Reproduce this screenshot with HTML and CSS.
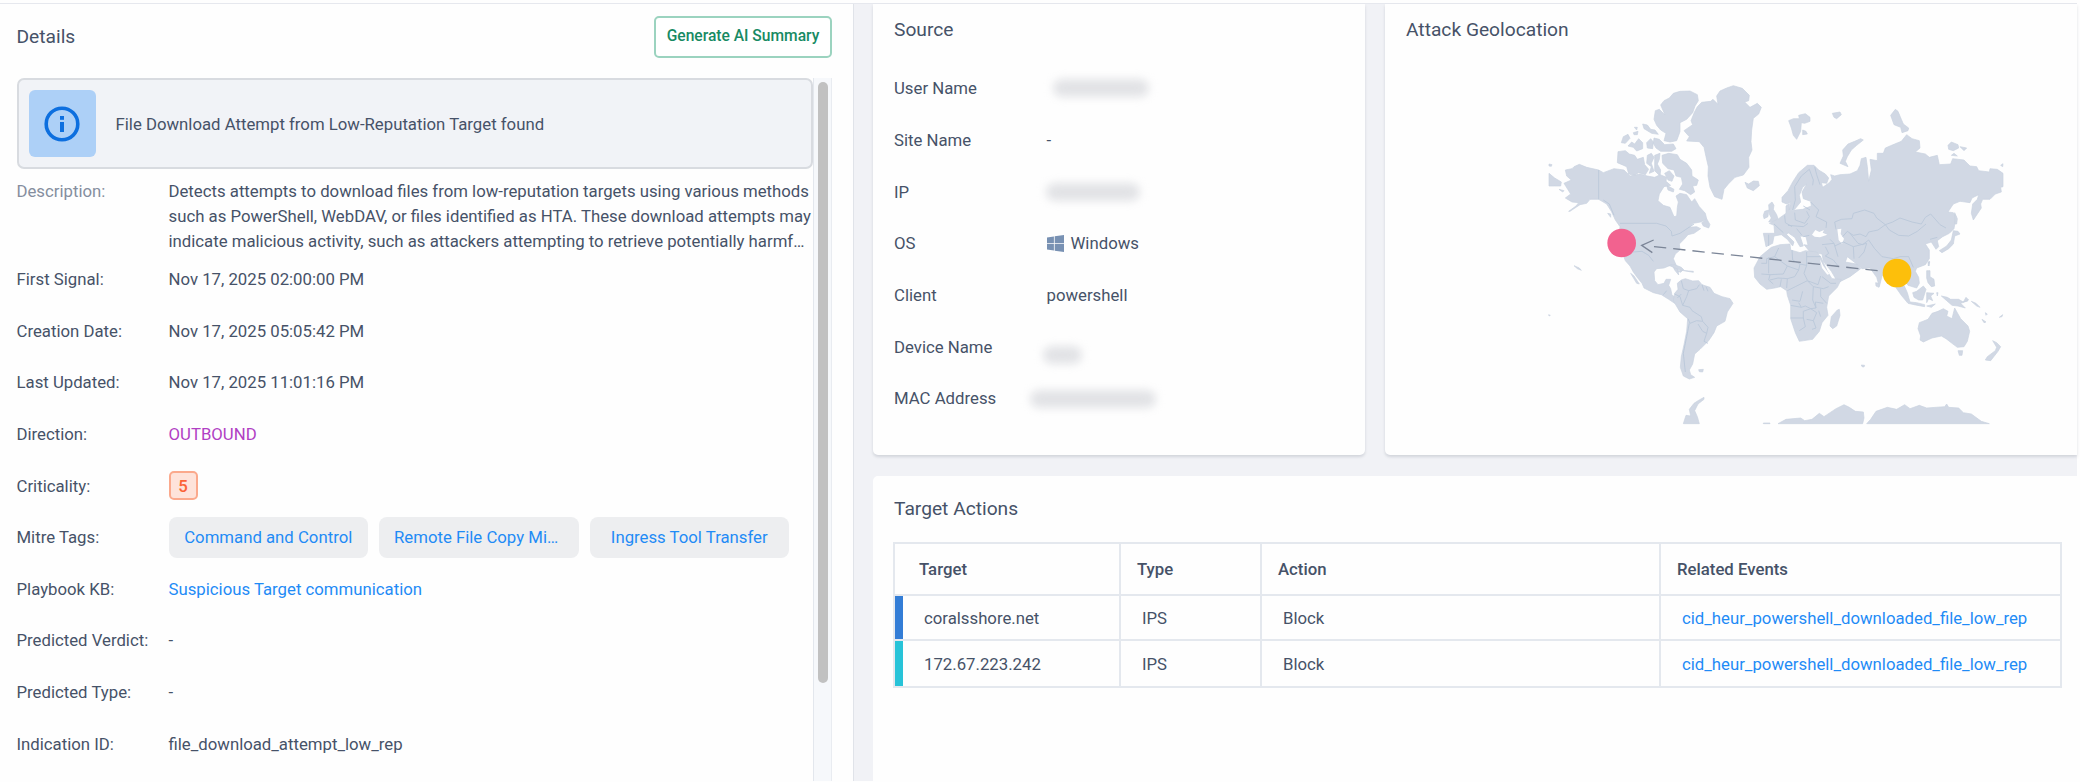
FILE: index.html
```html
<!DOCTYPE html>
<html lang="en">
<head>
	<meta charset="utf-8">
	<title>Story details</title>
	<link rel="stylesheet" href="styles.css">
</head>
<body>
	<div class="page">
		<section class="details">
			<header class="details-head">
				<h2>Details</h2>
				<button class="ai-btn">Generate AI Summary</button>
			</header>
			<div class="details-body">
				<div class="details-content">
					<div class="alert">
						<div class="alert-icon">
							<svg viewBox="0 0 36 36" width="36" height="36">
								<circle cx="18" cy="18" r="15.8" fill="none" stroke="#0d6fdf" stroke-width="3.6"/>
								<rect x="16" y="10" width="4" height="3.8" fill="#0d6fdf"/>
								<rect x="16" y="16" width="4" height="10" fill="#0d6fdf"/>
							</svg>
						</div>
						<span class="alert-text">File Download Attempt from Low-Reputation Target found</span>
					</div>
					<dl class="fields">
						<div class="field field-desc">
							<dt>Description:</dt>
							<dd>Detects attempts to download files from low-reputation targets using various methods<br>such as PowerShell, WebDAV, or files identified as HTA. These download attempts may<br>indicate malicious activity, such as attackers attempting to retrieve potentially harmf…</dd>
						</div>
						<div class="field"><dt>First Signal:</dt><dd>Nov 17, 2025 02:00:00 PM</dd></div>
						<div class="field"><dt>Creation Date:</dt><dd>Nov 17, 2025 05:05:42 PM</dd></div>
						<div class="field"><dt>Last Updated:</dt><dd>Nov 17, 2025 11:01:16 PM</dd></div>
						<div class="field"><dt>Direction:</dt><dd class="outbound">OUTBOUND</dd></div>
						<div class="field"><dt>Criticality:</dt><dd><span class="crit">5</span></dd></div>
						<div class="field">
							<dt>Mitre Tags:</dt>
							<dd class="tags">
								<a class="tag">Command and Control</a>
								<a class="tag tag-cut">Remote File Copy Mi…</a>
								<a class="tag">Ingress Tool Transfer</a>
							</dd>
						</div>
						<div class="field"><dt>Playbook KB:</dt><dd><a class="link">Suspicious Target communication</a></dd></div>
						<div class="field"><dt>Predicted Verdict:</dt><dd>-</dd></div>
						<div class="field"><dt>Predicted Type:</dt><dd>-</dd></div>
						<div class="field"><dt>Indication ID:</dt><dd>file_download_attempt_low_rep</dd></div>
					</dl>
				</div>
				<div class="scroll"><div class="thumb"></div></div>
			</div>
		</section>

		<main class="main">
			<div class="top-cards">
				<section class="card source">
					<h2>Source</h2>
					<dl class="src-list">
						<div class="src-row"><dt>User Name</dt><dd><span class="mask mask-user"></span></dd></div>
						<div class="src-row"><dt>Site Name</dt><dd>-</dd></div>
						<div class="src-row"><dt>IP</dt><dd><span class="mask mask-ip"></span></dd></div>
						<div class="src-row">
							<dt>OS</dt>
							<dd>
								<svg class="win" viewBox="0 0 17 17" width="17" height="17" fill="#7891b3">
									<path d="M0 2.4 6.9 1.4V8H0zM7.7 1.3 17 0v8H7.7zM0 8.8h6.9v6.7L0 14.6zM7.7 8.8H17V17l-9.3-1.3z"/>
								</svg>Windows
							</dd>
						</div>
						<div class="src-row"><dt>Client</dt><dd>powershell</dd></div>
						<div class="src-row"><dt>Device Name</dt><dd><span class="mask mask-device"></span></dd></div>
						<div class="src-row"><dt>MAC Address</dt><dd><span class="mask mask-mac"></span></dd></div>
					</dl>
				</section>

				<section class="card geo">
					<h2>Attack Geolocation</h2>
					<svg class="map" viewBox="0 0 1440 1110" width="480" height="370">
						<g class="land">
							<!-- Greenland, Iceland -->
							<path d="M432 182 458 164 453 152 463 127 472 110 485 97 512 94 519 88 534 103 530 78 540 63 560 54 580 47 607 55 628 76 626 92 614 96 630 112 652 100 664 112 656 132 640 145 635 180 633 215 636 240 626 262 627 292 610 315 585 322 565 342 552 358 546 388 524 380 510 352 504 318 505 290 498 260 492 232 478 215 440 213 448 200z"/>
							<path d="M615 337 626 342 640 333 655 334 658 347 640 362 622 354z"/>
							<!-- Arctic islands -->
							<path d="M362 105 372 92 388 84 400 70 420 64 450 63 472 74 475 92 465 108 458 128 440 148 420 158 420 185 410 212 390 216 372 212 378 190 362 180 350 166 342 148 346 122 358 118 375 135z"/>
							<path d="M244 218 250 200 264 193 270 205 256 220zM280 188 294 184 292 194 282 194zM283 172 292 172 290 180zM308 162 322 165 332 178 345 180 355 193 335 190 312 176zM264 228 275 216 284 222 296 206 308 218 308 236 290 243 280 232zM320 218 332 206 340 216 338 236 322 234zM342 204 358 208 374 224 400 222 408 236 395 244 362 244 348 234 340 220z"/>
							<path d="M234 245 256 242 268 252 284 256 292 268 310 262 314 284 326 298 316 314 296 308 282 316 266 312 260 290 246 284 232 278zM322 256 334 250 342 262 334 280 342 304 328 310 334 290 320 280zM344 256 360 250 358 268 352 282 362 300 360 318 344 302zM366 256 386 250 412 254 420 268 440 280 455 300 456 318 475 330 470 346 458 348 464 366 452 374 434 362 418 358 428 342 424 322 408 318 402 300 384 296 368 280zM374 310 388 302 402 318 396 334 384 330zM380 346 402 358 400 366 384 360z"/>
							<!-- North and Central America -->
							<path d="M76 300 96 296 102 290 118 283 140 292 176 300 190 308 222 296 252 300 270 318 300 312 322 318 344 322 360 314 380 322 378 334 392 346 372 350 358 372 354 392 370 406 390 412 402 440 410 438 412 412 415 396 408 378 420 370 440 374 455 396 464 386 478 410 496 430 500 446 482 456 460 460 446 472 470 470 482 476 462 490 444 494 432 508 418 522 420 540 406 552 400 566 414 598 416 615 404 600 396 584 372 594 350 596 342 606 344 632 354 644 372 640 378 628 392 628 386 646 392 656 396 676 412 684 424 690 404 700 386 688 364 674 340 668 312 654 306 640 290 620 280 606 270 588 256 572 244 540 236 500 240 470 226 450 214 424 200 402 176 388 150 388 140 400 120 404 90 424 86 424 108 408 116 398 96 396 76 384 92 372 72 340 94 330 80 318z"/>
							<path d="M27 310 44 324 64 336 62 348 44 348 27 348zM27 282 36 284 34 289 27 288zM57 358 72 362 68 366zM203 430 212 432 212 442zM485 458 500 446 510 464 506 474 490 468zM272 610 282 618 298 642 290 640zM386 586 404 584 424 592 434 602 460 604 460 607 420 600zM412 603 428 601 422 607zM102 587 118 594 124 601 112 596z"/>
							<!-- South America -->
							<g transform="translate(0 540)">
								<path d="M412 100 424 90 436 86 458 93 476 92 486 104 510 112 522 130 546 140 570 146 579 160 562 186 555 214 530 228 522 248 506 272 496 282 480 298 464 312 458 342 448 360 452 374 464 382 448 387 430 378 421 352 424 320 432 284 440 244 443 206 420 186 400 152 404 130 414 118zM476 359 490 358 488 366 478 365zM430 521 438 496 452 498 448 478 462 460 474 452 492 442 492 448 474 462 464 482 472 500 478 521zM26 194 31 196 27 198z"/>
							</g>
							<g transform="translate(660 0)">
								<!-- Arctic and Europe islands -->
								<path d="M86 152 100 146 118 146 116 136 136 131 150 142 150 154 134 160 124 158 122 184 110 208 100 196 94 174zM128 180 138 184 142 192 128 194zM217 130 240 126 244 134 230 146 222 142zM392 136 406 118 414 124 424 148 430 162 446 174 444 182 426 188 422 172 402 164zM240 280 250 258 248 240 264 222 284 214 302 206 310 210 290 226 274 240 262 260 256 274 264 290zM564 226 574 216 594 224 596 234 580 242 566 238zM600 230 620 234 612 242zM574 256 582 250 592 258zM722 286 729 281 728 290zM26 404 36 396 42 406 40 418 50 434 54 446 44 454 26 456 34 444 28 432zM10 436 14 424 26 420 24 440 12 446z"/>
								<!-- Eurasia -->
								<path d="M66 382 84 362 98 336 116 308 142 286 162 286 176 300 196 312 206 324 200 340 184 338 188 352 208 338 216 328 212 314 224 318 240 314 270 312 292 302 300 286 304 266 318 262 322 290 326 334 334 300 330 268 352 272 352 250 370 250 376 234 404 222 424 214 440 194 456 206 478 212 480 234 466 246 496 252 508 262 532 256 538 284 572 282 578 266 612 270 630 288 650 290 656 302 688 306 690 296 712 298 729 310 729 350 722 352 724 366 706 372 690 388 668 388 662 402 664 414 640 450 634 430 638 402 652 388 656 374 636 384 630 398 600 394 580 402 564 426 580 428 588 440 582 476 568 490 548 500 532 512 536 530 528 538 514 516 496 522 508 540 508 566 496 584 470 594 466 604 476 622 478 640 470 654 444 646 426 620 400 600 380 606 366 618 358 650 350 622 330 594 306 596 290 582 262 560 256 576 290 582 302 596 270 620 234 638 214 604 190 574 186 552 150 546 132 524 144 526 138 500 120 498 130 528 120 530 104 502 84 488 80 494 102 516 98 528 82 508 64 494 42 498 38 520 18 530 10 490 44 490 42 466 28 460 56 446 78 430 78 408 88 400 88 422 106 420 128 418 154 408 152 394 130 386 126 366 140 342 128 352 118 376 122 396 104 418 88 420 92 396 80 402 66 396z"/>
								<!-- Japan, Sakhalin, Philippines -->
								<path d="M584 428 592 446 590 462 584 462zM580 482 594 484 600 492 584 498 580 522 566 536 546 548 538 542 560 528 574 510zM504 576 509 574 505 588z"/>
							</g>
							<!-- Africa, Madagascar -->
							<path d="M694 532 720 524 750 522 752 540 780 548 796 542 830 546 842 560 862 604 876 626 904 628 892 652 866 678 860 712 864 736 846 758 838 784 818 808 778 814 766 788 752 746 752 706 742 676 740 662 722 650 704 654 680 658 660 642 644 622 642 594 660 560zM892 720 898 718 900 736 890 768 878 776 870 768 874 740z"/>
							<g transform="translate(630 540)">
								<!-- South-East Asia -->
								<path d="M377 98 386 100 387 112 378 108zM436 110 448 112 462 106 472 128 480 156 500 158 524 164 524 170 492 164 474 160 454 136zM488 128 500 124 520 108 528 118 518 150 506 150 492 142zM530 128 552 130 542 138 548 152 536 146 530 158zM530 62 540 62 540 80 552 88 554 108 544 110 534 98 530 84zM535 38 539 36 537 48zM530 168 556 162 544 172zM560 128 564 128 562 138zM574 138 592 142 602 148 626 148 640 156 654 152 632 160 646 174 624 168 606 166 590 152zM648 142 656 150 640 156zM664 154 678 160 690 172 680 168zM706 188 712 192 708 196zM696 208 708 216 702 218zM748 202 758 194 756 200z"/>
								<!-- Australia, New Zealand -->
								<path d="M508 218 534 208 546 190 564 184 580 176 594 184 590 198 606 206 614 174 624 192 632 206 654 228 659 244 652 274 642 290 622 292 606 280 588 266 574 258 546 264 520 276 510 270 512 258 504 236zM624 302 638 302 636 316 628 316zM728 272 740 278 752 290 744 304 722 332 706 330 712 320 736 302 740 292zM334 345 344 346 342 351 336 350z"/>
								<!-- Antarctica -->
								<path d="M40 519h20v2H40zM84 521 108 508 152 504 164 512 186 508 208 490 222 500 258 476 282 464 298 472 316 484 340 486 342 504 338 521zM350 521 362 508 378 484 412 472 440 478 464 464 480 476 508 466 530 474 584 470 590 462 596 472 626 474 640 488 664 492 694 514 718 521z"/>
							</g>
						</g>
						<!-- inland waters -->
						<path class="water" d="M816 494 826 480 838 486 852 480 848 488 862 494 840 502 824 500zM892 478 904 476 902 492 912 506 906 522 896 510zM840 568 850 588 868 612 862 614 846 594z"/>
						<!-- country borders -->
						<g class="borders">
							<path d="M176 300V388M190 390 208 402 222 436M240 460H350L378 468 394 484 396 498 420 490 444 474 462 462M278 546 306 544 326 556 340 574M370 674 380 662M412 684 424 672"/>
							<path transform="translate(0 540)" d="M424 92 430 116 446 122 440 140 428 166 450 172 456 182 484 200 488 214 470 212 450 220 444 206M404 132 420 140 428 166M446 122 470 116 478 104M486 104 492 122M498 110 504 124M448 220 440 260 430 310 436 366M488 214 504 232 500 250 488 244 474 222M500 250 492 274 504 280"/>
							<path transform="translate(660 0)" d="M98 420 106 390 104 350 124 318 148 298 160 330 158 346M164 290 170 314 180 344M152 396 176 420 168 440 200 456 198 474M130 408 150 420M74 436 76 458 96 470M104 428 106 450 134 460 148 440 140 424M42 462 70 488M84 466 130 470 144 460M110 476 126 496M148 496 130 500M26 494V528M228 478 224 456 244 448 276 446 280 430 314 420 342 430 350 444 376 464 354 480 326 486 318 500 300 492 280 496 262 484 248 500M376 464 398 456 420 444 456 456 484 462 496 442 512 432 540 464 558 474M376 464 388 480 416 496 446 498 472 484 498 462M326 510 344 536 366 560 400 566 420 560 446 560 460 592M270 490 294 520 308 524 326 510M222 520 234 560M224 528 250 516 280 530 282 566M280 530 320 520 312 546 296 564M210 508 222 520 186 524M196 530 206 550 196 558 220 570 236 590M510 508 532 502"/>
							<path d="M716 534 704 560 680 566 680 580 664 580M704 560 742 588 730 612 690 614M686 562V610M756 540 758 570 780 582 776 600 764 620M780 582 800 586 800 560H842M800 560V546M800 586 792 610 802 630M742 588 776 600M664 612 690 614 686 630 700 642M690 630 714 624 742 626 764 620M724 628 720 650M742 626 740 654M742 662 766 650 802 632 834 644 842 618M802 632 820 650 850 656 866 650M846 620 872 640 888 640M756 690 780 694 788 664M820 650 818 690 828 714 812 716 796 708 784 712 776 698M752 706 784 712M828 714 826 696 850 700M752 744H790V724L812 716M790 744 796 770 778 782M812 716 830 728 820 752 800 748M820 752 828 774 816 778M836 722 842 740M842 656V680L860 700"/>
						</g>
						<!-- attack route -->
						<path class="route" d="M1013 602 335 529"/>
						<path class="route-head" d="M341 510 305 526 337 548"/>
						<circle cx="245" cy="519" r="43" fill="#f2628f"/>
						<circle cx="1071" cy="609" r="43" fill="#fdbf0b"/>
					</svg>
				</section>
			</div>

			<section class="card actions">
				<h2>Target Actions</h2>
				<table>
					<colgroup><col class="c1"><col class="c2"><col class="c3"><col class="c4"></colgroup>
					<thead>
						<tr><th>Target</th><th>Type</th><th>Action</th><th>Related Events</th></tr>
					</thead>
					<tbody>
						<tr class="blue"><td>coralsshore.net</td><td>IPS</td><td>Block</td><td><a class="link">cid_heur_powershell_downloaded_file_low_rep</a></td></tr>
						<tr class="cyan"><td>172.67.223.242</td><td>IPS</td><td>Block</td><td><a class="link">cid_heur_powershell_downloaded_file_low_rep</a></td></tr>
					</tbody>
				</table>
			</section>
		</main>
	</div>
</body>
</html>
```

FILE: styles.css
```css
*{
	box-sizing:border-box;
}
body{
	margin:0;
	width:2080px;
	height:782px;
	overflow:hidden;
	background:#fefefe;
	color:#465268;
	font-family:Roboto, "Liberation Sans", sans-serif;
	font-size:16.75px;
}
h2, dl, dd{
	margin:0;
}
h2{
	font-size:19.2px;
	line-height:24px;
	font-weight:400;
}
.page{
	display:flex;
	width:2077px;
	height:778px;
	margin-top:3px;
	border-top:1px solid #e6e8ee;
}

/* left panel */
.details{
	width:853px;
	padding:12px 21px 0 16.5px;
	display:flex;
	flex-direction:column;
}
.details-head{
	display:flex;
	justify-content:space-between;
	align-items:center;
	height:42px;
	flex:none;
}
.ai-btn{
	width:178px;
	height:42px;
	padding:0 0 3px;
	border:2px solid #9bd3bf;
	border-radius:5px;
	background:#fff;
	color:#178a63;
	font-family:inherit;
	font-size:15.6px;
	font-weight:500;
	white-space:nowrap;
}
.details-body{
	display:flex;
	flex:1;
	margin-top:20px;
	min-height:0;
}
.details-content{
	width:796.5px;
}
.alert{
	display:flex;
	align-items:center;
	height:91px;
	padding-left:10px;
	border:2px solid #d8dbe0;
	border-radius:7px;
	background:#f1f3f7;
}
.alert-icon{
	display:flex;
	align-items:center;
	justify-content:center;
	width:67px;
	height:67px;
	border-radius:6px;
	background:#add0f7;
}
.alert-text{
	margin-left:20px;
}
.field{
	display:flex;
	align-items:center;
	height:51.6px;
}
.field dt{
	width:152px;
	flex:none;
	white-space:nowrap;
}
.field dd{
	white-space:nowrap;
}
.field-desc{
	align-items:flex-start;
	height:84.5px;
	padding-top:10px;
	line-height:25px;
}
.field-desc dt{
	color:#858e9e;
}
.field .outbound{
	color:#b13fc4;
}
.crit{
	display:flex;
	align-items:center;
	justify-content:center;
	width:29px;
	height:29px;
	border:2px solid #fba98c;
	border-radius:5px;
	background:#fee3da;
	color:#fb6236;
	font-weight:500;
}
.tags{
	display:flex;
	gap:11px;
}
.tag{
	width:199.5px;
	height:41px;
	border-radius:8px;
	background:#edeef0;
	color:#1f8bf6;
	line-height:41px;
	text-align:center;
}
.tag-cut{
	padding-left:15px;
	text-align:left;
}
.link{
	color:#1f8bf6;
}
.scroll{
	width:19px;
	padding:4px 4px 0;
	border-left:1px solid #e3e7ed;
	border-right:1px solid #e9ecf1;
	background:#f6f8fb;
}
.thumb{
	width:10px;
	height:601px;
	border-radius:5px;
	background:#c1c1c1;
}

/* right side */
.main{
	width:1224px;
	padding-left:19px;
	border-left:1px solid #e0e3e9;
	background:#f1f2f6;
	display:flex;
	flex-direction:column;
	gap:21px;
}
.top-cards{
	display:flex;
	gap:20px;
	height:451px;
}
.card{
	background:#fefefe;
	border-radius:5px;
	box-shadow:0 2px 3px rgba(60,70,90,.17);
}
.source{
	width:492px;
	padding:14px 21px 0;
	border-radius:0 0 5px 5px;
}
.src-list{
	margin-top:20.5px;
}
.src-row{
	display:flex;
	align-items:center;
	height:51.7px;
}
.src-row dt{
	width:152.5px;
}
.src-row dd{
	display:flex;
	align-items:center;
}
.win{
	margin-right:7px;
}
/* redacted values */
.mask{
	display:block;
	height:18px;
	border-radius:9px;
	background:#e2e3e6;
	filter:blur(4.5px);
}
.mask-user{
	width:96px;
	margin-left:6px;
}
.mask-ip{
	width:94px;
	margin-left:-1px;
}
.mask-device{
	width:39px;
	margin:16px 0 0 -4px;
}
.mask-mac{
	width:126px;
	margin:2px 0 0 -17px;
}
.geo{
	flex:1;
	padding:14px 0 0 21px;
	border-radius:0 0 0 5px;
}
.map{
	display:block;
	margin:28px 0 0 134px;
}
.land{
	fill:#d1d8e4;
	stroke:#c8d2df;
	stroke-width:2;
	stroke-linejoin:round;
}
.water{
	fill:#fefefe;
}
.borders{
	fill:none;
	stroke:#b8c7d9;
	stroke-width:2.5;
}
.route, .route-head{
	fill:none;
	stroke:#7b8597;
	stroke-width:4;
}
.route{
	stroke-dasharray:37 21;
}
.actions{
	flex:1;
	padding:21px 17px 0 21px;
	border-radius:5px 0 0 0;
	box-shadow:none;
}
.actions table{
	width:1167px;
	margin:21px 0 0 -1px;
	table-layout:fixed;
	border-collapse:collapse;
	border:2px solid #dbe1e9;
}
.c1{ width:226px; }
.c2{ width:141px; }
.c3{ width:399px; }
.c4{ width:401px; }
.actions th, .actions td{
	padding:0 0 0 21px;
	border:2px solid #e4e8ee;
	text-align:left;
	white-space:nowrap;
}
.actions th{
	height:52px;
	padding:0 0 1px 16px;
	font-weight:500;
}
.actions td{
	height:45px;
}
.actions .cyan td{
	height:47px;
}
.actions th:first-child{
	padding-left:24px;
}
.actions td:first-child{
	padding-left:29px;
}
.blue td:first-child{
	background:linear-gradient(#337dd6, #337dd6) no-repeat 0 0/8px 100%;
}
.cyan td:first-child{
	background:linear-gradient(#27c3d8, #27c3d8) no-repeat 0 0/8px 100%;
}
```
